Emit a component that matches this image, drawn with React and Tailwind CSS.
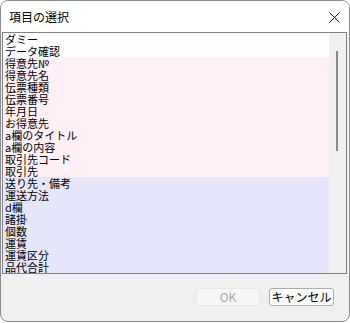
import React from "react";

const items = [
  { label: "ダミー", tone: "none" },
  { label: "データ確認", tone: "none" },
  { label: "得意先№", tone: "pink" },
  { label: "得意先名", tone: "pink" },
  { label: "伝票種類", tone: "pink" },
  { label: "伝票番号", tone: "pink" },
  { label: "年月日", tone: "pink" },
  { label: "お得意先", tone: "pink" },
  { label: "a欄のタイトル", tone: "pink" },
  { label: "a欄の内容", tone: "pink" },
  { label: "取引先コード", tone: "pink" },
  { label: "取引先", tone: "pink" },
  { label: "送り先・備考", tone: "blue" },
  { label: "運送方法", tone: "blue" },
  { label: "d欄", tone: "blue" },
  { label: "諸掛", tone: "blue" },
  { label: "個数", tone: "blue" },
  { label: "運賃", tone: "blue" },
  { label: "運賃区分", tone: "blue" },
  { label: "品代合計", tone: "blue" },
];

const toneClass = {
  none: "bg-white",
  pink: "bg-[#fff0f5]",
  blue: "bg-[#e6e6fa]",
};

const font = { fontFamily: '"Noto Sans CJK JP", "Noto Sans", sans-serif' };

const App = () => {
  return (
    <div className="w-[350px] h-[323px] bg-white" style={font}>
      <div className="w-[350px] h-[322px] bg-[#f0f0f0] border border-[#8c8c8c] rounded-lg overflow-hidden flex flex-col">
        {/* title bar */}
        <div className="h-[31px] bg-white flex items-center justify-between pl-[8px] pr-[9px] shrink-0">
          <span className="text-[12px] leading-[12px] text-black">項目の選択</span>
          <svg width="11" height="11" viewBox="0 0 11 11" className="mt-[1px]">
            <path d="M0.5 0.5 L10.5 10.5 M10.5 0.5 L0.5 10.5" stroke="#111" strokeWidth="1" />
          </svg>
        </div>

        {/* list box */}
        <div className="ml-[1px] w-[345px] border border-[#7f848c] flex shrink-0">
          <div className="w-[326px] flex flex-col">
            {items.map((item) => (
              <div
                key={item.label}
                className={`h-[12px] leading-[12px] text-[11px] text-black pl-[2px] whitespace-nowrap ${toneClass[item.tone]}`}
              >
                {item.label}
              </div>
            ))}
          </div>
          <div className="w-[17px] bg-[#f0f0f0] pt-[18px] pl-[7px]">
            <div className="w-[2px] h-[100px] bg-[#8a8a8a]" />
          </div>
        </div>

        {/* buttons */}
        <div className="flex justify-end gap-[9px] pr-[15px] pt-[14px]">
          <button
            disabled
            className="w-[64px] h-[18px] rounded-[3px] border border-[#e8e8e8] bg-[#f6f6f6] text-[12px] leading-[12px] text-[#a8a8a8]"
          >
            OK
          </button>
          <button className="w-[65px] h-[18px] rounded-[3px] border border-[#adadad] bg-[#fdfdfd] text-[12px] leading-[12px] text-black">
            キャンセル
          </button>
        </div>
      </div>
    </div>
  );
};

export default App;
